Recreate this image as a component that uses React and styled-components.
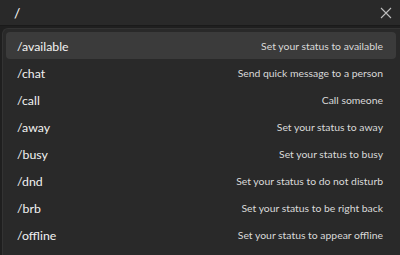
import React from "react";
import styled, { createGlobalStyle } from "styled-components";

const Global = createGlobalStyle`
  html, body { margin: 0; padding: 0; background: #1f1f1f; }
  body { font-family: "Lato", "Noto Sans", sans-serif; }
  * { box-sizing: border-box; }
`;

const Page = styled.div`
  width: 400px;
  height: 255px;
  display: flex;
  flex-direction: column;
  background: #1f1f1f;
  overflow: hidden;
`;

const SearchBar = styled.div`
  height: 26px;
  display: flex;
  align-items: center;
  justify-content: space-between;
  padding: 0 8px 0 14px;
  background: #292929;
  border-bottom: 1px solid #1a1a1a;
  color: #ffffff;
  font-size: 14px;
`;

const Query = styled.span`
  line-height: 1;
`;

const Close = styled.svg`
  width: 12px;
  height: 12px;
`;

const Menu = styled.div`
  margin: 2px 0 0 2px;
  flex: 1;
  background: #292929;
  border-top-left-radius: 6px;
  border-left: 1px solid #333;
  border-top: 1px solid #333;
  padding: 3px 4px 0 3px;
  display: flex;
  flex-direction: column;
`;

const Row = styled.div`
  height: 27px;
  display: flex;
  align-items: center;
  justify-content: space-between;
  padding: 1px 13px 0 11px;
  border-radius: 4px;
  background: ${(p) => (p.$active ? "#3b3b3b" : "transparent")};
`;

const Command = styled.span`
  color: #f2f2f2;
  font-size: 12.3px;
`;

const Desc = styled.span`
  color: #d9d9d9;
  font-size: 10.4px;
`;

const items = [
  ["/available", "Set your status to available"],
  ["/chat", "Send quick message to a person"],
  ["/call", "Call someone"],
  ["/away", "Set your status to away"],
  ["/busy", "Set your status to busy"],
  ["/dnd", "Set your status to do not disturb"],
  ["/brb", "Set your status to be right back"],
  ["/offline", "Set your status to appear offline"],
];

export default function App() {
  return (
    <Page>
      <Global />
      <SearchBar>
        <Query>/</Query>
        <Close viewBox="0 0 12 12">
          <path d="M1 1 L11 11 M11 1 L1 11" stroke="#bdbdbd" strokeWidth="1.1" fill="none" />
        </Close>
      </SearchBar>
      <Menu>
        {items.map(([c, d], i) => (
          <Row key={c} $active={i === 0}>
            <Command>{c}</Command>
            <Desc>{d}</Desc>
          </Row>
        ))}
      </Menu>
    </Page>
  );
}
